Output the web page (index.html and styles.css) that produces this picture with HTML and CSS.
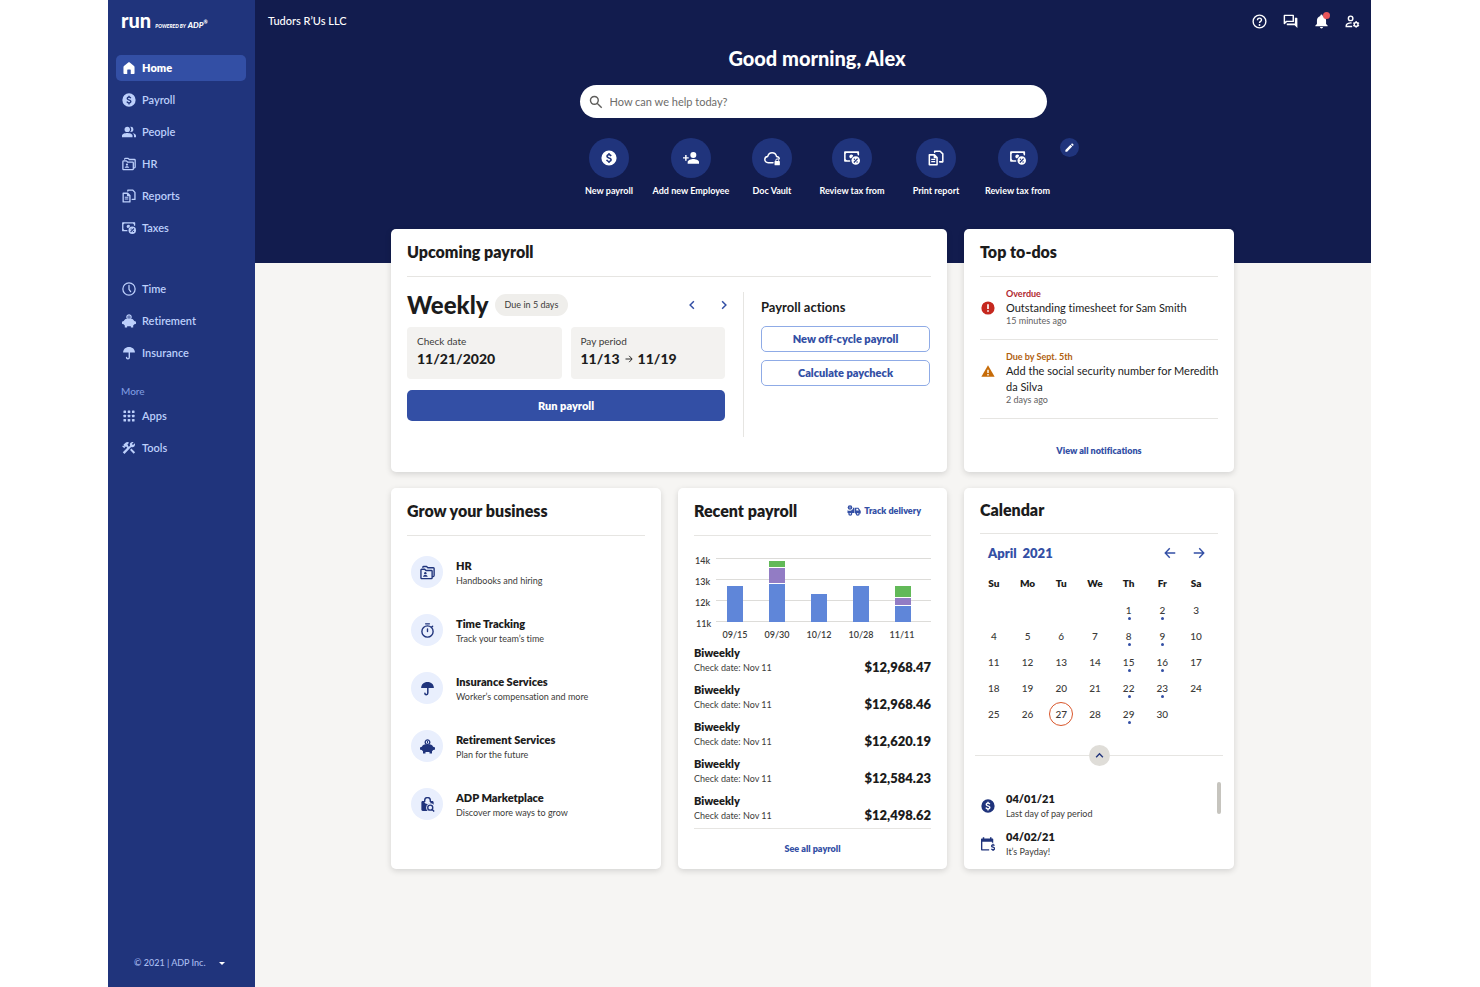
FILE: index.html
```html
<!DOCTYPE html>
<html lang="en">
<head>
<meta charset="utf-8">
<meta name="viewport" content="width=device-width, initial-scale=1">
<title>RUN – Home</title>
<link rel="stylesheet" href="styles.css">
</head>
<body>
<svg class="sprite" aria-hidden="true">
  <symbol id="i-home" viewBox="0 0 24 24"><path fill="currentColor" d="M2.5 10.6c0-.8.3-1.4.9-1.9l7.3-6.2c.8-.6 1.8-.6 2.6 0l7.3 6.2c.6.5.9 1.1.9 1.9V21c0 .8-.5 1.3-1.300 1.300H15V15.500c0-.6-.4-1-1-1h-4c-.6 0-1 .4-1 1v6.800H3.800c-.8 0-1.300-.5-1.300-1.300z"/></symbol>
  <symbol id="i-dollar" viewBox="0 0 24 24"><path fill="currentColor" fill-rule="evenodd" d="M12 .6a11.400 11.400 0 1 0 0 22.800 11.400 11.400 0 0 0 0-22.800zm1.100 17.300V19.500h-2.200v-1.500c-1.600-.3-2.900-1.200-3.400-3l2.200-.9c.4 1.300 1.200 1.900 2.400 1.900 1.100 0 1.800-.5 1.800-1.300 0-.9-.8-1.200-2.300-1.700-1.800-.6-3.700-1.300-3.700-3.500 0-1.800 1.200-3 3-3.400V4.600h2.200v1.500c1.500.3 2.500 1.200 3 2.600l-2.100.9c-.3-.9-1-1.400-2-1.400s-1.700.4-1.700 1.200c0 .8.8 1.100 2.500 1.700 1.900.7 3.500 1.400 3.500 3.600 0 1.800-1.200 2.900-3.200 3.200z"/></symbol>
  <symbol id="i-people" viewBox="0 0 24 24"><g fill="currentColor"><circle cx="9" cy="7.500" r="4.600"/><path d="M9 13.600c-3 0-9 1.300-9 4.300V21h18v-3.100c0-3-6-4.300-9-4.300zM15 12.100a4.600 4.600 0 1 0-1-9.100 7 7 0 0 1 0 9zM18.200 14c1.500 1 2.400 2.200 2.400 4v3H24v-3.100c0-2.100-2.900-3.400-5.800-3.900z"/></g></symbol>
  <symbol id="i-hr" viewBox="0 0 24 24"><path fill="none" stroke="currentColor" stroke-width="2.200" stroke-linejoin="round" stroke-linecap="round" d="M1.500 20.500V8c0-.8.500-1.300 1.300-1.300h4.700l2 2h8.700c.7 0 1.200.5 1.200 1.200v10.600c0 .8-.5 1.300-1.200 1.300H2.800c-.8 0-1.300-.5-1.300-1.300zM4.500 3.600C4.700 2.700 5.200 2.300 6 2.300h4.500l2 2h8.800c.8 0 1.300.5 1.300 1.300v10.900c0 1.200-.4 1.800-1.300 2"/><circle cx="8.500" cy="13" r="1.900" fill="currentColor"/><path fill="currentColor" d="M4.800 18.600c0-1.700 1.600-2.600 3.700-2.600s3.700.9 3.700 2.600z"/></symbol>
  <symbol id="i-reports" viewBox="0 0 24 24"><path fill="none" stroke="currentColor" stroke-width="2.300" stroke-linejoin="round" stroke-linecap="round" d="M2 7.300h7.600l4 4V22.200H2zM9.600 7.300v4h4M10 3.500V1.800h8.200l4 4v12h-4.700"/><path stroke="currentColor" stroke-width="1.800" d="M4.800 14h6M4.800 17.300h6"/></symbol>
  <symbol id="i-taxes" viewBox="0 0 24 24"><path fill="none" stroke="currentColor" stroke-width="2.300" stroke-linejoin="round" stroke-linecap="round" d="M8.500 16.500H1.300V3.200h20.200v4"/><path fill="currentColor" d="M1 3h3.500C4 4.500 3 5.700 1 6zM1 13.500c2 .3 3 1.500 3.500 3H1zM22 3h-3.500c.5 1.500 1.500 2.700 3.500 3z"/><circle cx="11" cy="9.600" r="3" fill="currentColor"/><circle class="ring" cx="17.600" cy="15.800" r="7.600"/><circle cx="17.600" cy="15.800" r="6.400" fill="currentColor"/><g class="cut"><path d="m14.800 18.700 5.600-5.800"/><circle cx="15.600" cy="13.800" r="1.100"/><circle cx="19.600" cy="17.900" r="1.100"/></g></symbol>
  <symbol id="i-clock" viewBox="0 0 24 24"><path fill="none" stroke="currentColor" stroke-width="2.200" stroke-linecap="round" d="M12 1.500a10.500 10.500 0 1 0 0 21 10.500 10.500 0 0 0 0-21zM12 6v6.500l2.800 4"/></symbol>
  <symbol id="i-piggy" viewBox="0 0 24 24"><g fill="currentColor"><path d="M3 12.200c1.200-2.900 3.800-4.300 9-4.300s7.800 1.400 9 4.300l2.400.8c.4.100.6.400.6.800v2.400c0 .4-.2.700-.6.800l-2.200.7-2 2V23h-4v-2.200H8.800V23h-4v-3.300l-2-2L.6 17c-.4-.1-.6-.4-.6-.8v-2.400c0-.4.200-.7.600-.8z"/><path fill-rule="evenodd" d="M12 .4a4.800 4.800 0 0 0-3.700 7.800h7.400A4.800 4.800 0 0 0 12 .4zm0 2a2.600 2.600 0 1 1 0 5.200 2.600 2.600 0 0 1 0-5.200z"/><rect x="11.200" y="3.200" width="1.600" height="3.500"/></g></symbol>
  <symbol id="i-umbrella" viewBox="0 0 24 24"><path fill="currentColor" d="M12 1.500c-6 0-10.200 4-10.200 9.800h20.400C22.200 5.500 18 1.500 12 1.500z"/><path fill="none" stroke="currentColor" stroke-width="2.400" stroke-linecap="round" d="M12.500 10.500v8.800c0 1.700-1 2.700-2.400 2.700s-2.300-.9-2.300-2.300"/></symbol>
  <symbol id="i-apps" viewBox="0 0 24 24"><g fill="currentColor"><rect x="2.500" y="2.500" width="4.400" height="4.400" rx="1"/><rect x="9.800" y="2.500" width="4.400" height="4.400" rx="1"/><rect x="17.100" y="2.500" width="4.400" height="4.400" rx="1"/><rect x="2.500" y="9.800" width="4.400" height="4.400" rx="1"/><rect x="9.800" y="9.800" width="4.400" height="4.400" rx="1"/><rect x="17.100" y="9.800" width="4.400" height="4.400" rx="1"/><rect x="2.500" y="17.100" width="4.400" height="4.400" rx="1"/><rect x="9.800" y="17.100" width="4.400" height="4.400" rx="1"/><rect x="17.100" y="17.100" width="4.400" height="4.400" rx="1"/></g></symbol>
  <symbol id="i-tools" viewBox="0 0 24 24"><path fill="currentColor" d="m13.800 15.300 2.200-2.300 6.500 6.300-2.500 2.600zM17.500 10.500c2.900 0 4.800-2.100 4.800-4.600 0-.7-.1-1.300-.4-1.900l-3 3-2-2 3-3c-.6-.3-1.200-.4-1.900-.4-2.500 0-4.600 1.900-4.600 4.600 0 .7.100 1.200.4 1.800l-2 2-1.900-1.900.8-.8-1.500-1.500 3-3c-1.700-1.700-4.400-1.700-6.100 0L2.400 6.500l1.500 1.500H1l-.8.800L4 12.500l.8-.8V8.900l1.500 1.500.8-.8L9 11.500l-7.700 7.700 2.900 2.900L15.700 10.100c.6.300 1.100.4 1.800.4z"/></symbol>
  <symbol id="i-help" viewBox="0 0 24 24"><path fill="none" stroke="currentColor" stroke-width="2.200" d="M12 1.800a10.200 10.200 0 1 0 0 20.400 10.200 10.200 0 0 0 0-20.400zM8.800 9.800c0-1.800 1.300-3.200 3.200-3.200s3.200 1.300 3.200 2.900c0 2.200-3.200 2.500-3.200 5"/><circle cx="12" cy="17.500" r="1.500" fill="currentColor"/></symbol>
  <symbol id="i-chat" viewBox="0 0 24 24"><path fill="none" stroke="currentColor" stroke-width="2.300" stroke-linejoin="round" d="M2.200 2.200h14.200v9.600H5.700l-3.500 3.500z"/><path fill="currentColor" d="M19 6h3c.6 0 1 .4 1 1v15.500L18.600 18H7c-.6 0-1-.4-1-1v-2h13z"/></symbol>
  <symbol id="i-bell" viewBox="0 0 24 24"><path fill="currentColor" d="M12 23c1.300 0 2.400-1 2.400-2.300H9.600C9.600 22 10.700 23 12 23zm7.300-7V10.500c0-3.700-2-6.500-5.500-7.400V2.400a1.800 1.800 0 0 0-3.600 0v.7c-3.500.9-5.500 3.700-5.500 7.400V16l-2.500 2.300v1.200h19.600v-1.200z"/></symbol>
  <symbol id="i-user-gear" viewBox="0 0 24 24"><g fill="none" stroke="currentColor"><circle cx="9" cy="7" r="3.600" stroke-width="2.300"/><path stroke-width="2.300" d="M10.500 14.300c-4.500-.4-8.500 1.600-8.500 4v1.600h9.500"/><circle cx="17.800" cy="16.600" r="3" stroke-width="2.200"/><path stroke-width="2" d="M17.800 11.200v2.400M17.800 19.600V22M13.100 13.900l2.100 1.200M20.400 18.100l2.100 1.200M13.100 19.300l2.100-1.200M20.400 15.100l2.100-1.200"/></g></symbol>
  <symbol id="i-search" viewBox="0 0 24 24"><path fill="none" stroke="currentColor" stroke-width="2.400" d="M9.200 2.500a6.700 6.700 0 1 0 0 13.400 6.700 6.700 0 0 0 0-13.400zM14 14l7.800 7.800"/></symbol>
  <symbol id="i-add-user" viewBox="0 0 24 24"><g fill="currentColor"><circle cx="15.500" cy="7.500" r="4.500"/><path d="M15.500 13.500c-3 0-8.500 1.500-8.500 4.500v2.500h17V18c0-3-5.500-4.500-8.500-4.500z"/><path d="M3.200 7.500h2.200v3.200h3.200v2.200H5.400V16H3.200v-3.100H0v-2.200h3.200z"/></g></symbol>
  <symbol id="i-cloud" viewBox="0 0 24 24"><path fill="none" stroke="currentColor" stroke-width="2.200" stroke-linecap="round" d="M13.500 19H6.200C3.300 19 1.200 17 1.200 14.300c0-2.600 2-4.500 4.300-4.700C6.400 6.300 8.900 4 12.100 4c3.600 0 6 2.400 6.700 5.600 2.300.2 3.900 1.600 4 3.600"/><rect x="15.800" y="16.500" width="8" height="6.500" rx="1" fill="currentColor"/><path fill="none" stroke="currentColor" stroke-width="1.500" d="M17.700 17v-1.500a2.100 2.100 0 0 1 4.200 0V17"/></symbol>
  <symbol id="i-pencil" viewBox="0 0 24 24"><path fill="currentColor" d="M3 17.300V21h3.800L17.900 9.900l-3.800-3.800zM20.700 7c.4-.4.400-1 0-1.400l-2.300-2.300c-.4-.4-1-.4-1.400 0l-1.800 1.800 3.700 3.800z"/></symbol>
  <symbol id="i-left" viewBox="0 0 24 24"><path fill="none" stroke="currentColor" stroke-width="3.600" d="M16.500 3 7.500 12l9 9"/></symbol>
  <symbol id="i-right" viewBox="0 0 24 24"><path fill="none" stroke="currentColor" stroke-width="3.600" d="m7.500 3 9 9-9 9"/></symbol>
  <symbol id="i-up" viewBox="0 0 24 24"><path fill="none" stroke="currentColor" stroke-width="3.600" d="m3 16.500 9-9 9 9"/></symbol>
  <symbol id="i-arrow-left" viewBox="0 0 24 24"><path fill="none" stroke="currentColor" stroke-width="2.800" d="M22.500 12H3M11.500 2.500 2.500 12l9 9.500"/></symbol>
  <symbol id="i-arrow-right" viewBox="0 0 24 24"><path fill="none" stroke="currentColor" stroke-width="2.800" d="M1.500 12H21M12.500 2.500l9 9.500-9 9.500"/></symbol>
  <symbol id="i-error" viewBox="0 0 24 24"><circle cx="12" cy="12" r="11.300" fill="currentColor"/><path fill="#fff" d="M10.600 5.500h2.800v8h-2.800zM10.600 15.800h2.800v2.800h-2.800z"/></symbol>
  <symbol id="i-warning" viewBox="0 0 24 24"><path fill="currentColor" d="M.6 22 12 2l11.400 20z"/><path fill="#fff" d="M10.800 9.800h2.400v5.700h-2.400zM10.800 17.200h2.400v2.400h-2.400z"/></symbol>
  <symbol id="i-timer" viewBox="0 0 24 24"><path fill="none" stroke="currentColor" stroke-width="2.200" stroke-linecap="round" d="M12 4.600a9 9 0 1 0 0 18 9 9 0 0 0 0-18zM9 1.300h6M12 9.500v4M18.700 6.600l1.500-1.400"/></symbol>
  <symbol id="i-market" viewBox="0 0 24 24"><path fill="none" stroke="currentColor" stroke-width="2.200" d="M7.500 8V5.500a4.500 4.500 0 0 1 9 0V8"/><path fill="currentColor" d="M2.200 8.500c0-1.400.8-2.300 2.200-2.300h2.200c.4 2.700 2 4.800 5.400 4.800s5-2.100 5.400-4.800h2.200c1.400 0 2.200.9 2.200 2.300v3.700a6.900 6.900 0 0 0-12 4.600c0 2.200.9 4.300 2.500 5.500H4.400c-1.400 0-2.200-.8-2.200-2.200z"/><path fill="none" stroke="currentColor" stroke-width="2.200" d="M16.400 13a4 4 0 1 0 0 8 4 4 0 0 0 0-8zM19.300 19.800l3.400 3.500"/></symbol>
  <symbol id="i-truck" viewBox="0 0 28 22"><g fill="currentColor"><circle cx="6" cy="5" r="4.600"/><path d="M1 10.500c3 2 7.500 1.500 10-1.500.8-1 1.200-2.300 1.200-3.500H15V16H1zM16 5.500h5.800c.7 0 1.300.3 1.700.9l3.300 4.600c.5.700.7 1.100.7 1.800V17H16z"/><circle cx="6.500" cy="17.500" r="4"/><circle cx="21.500" cy="17.500" r="4"/></g><g fill="#fff"><circle cx="6.500" cy="17.500" r="1.500"/><circle cx="21.500" cy="17.500" r="1.500"/><path d="M18.500 7.500h3l2.300 3.500h-5.300zM5.300 3h1.400v4H5.300z"/></g></symbol>
  <symbol id="i-payday" viewBox="0 0 24 24"><path fill="currentColor" d="M0 4.200c0-1 .7-1.700 1.700-1.700H3V.3h2.600v2.200h9.800V.3H18v2.200h1.300c1 0 1.700.7 1.700 1.700V10h-2.300V8H2.300v13H14v2.300H1.700C.7 23.300 0 22.600 0 21.600z"/><path fill="none" stroke="currentColor" stroke-width="2.300" d="M23 14.800c-.5-1-1.300-1.400-2.400-1.400-1.500 0-2.500.8-2.500 2 0 2.900 5.100 1.300 5.100 4.200 0 1.300-1 2.200-2.600 2.200-1.400 0-2.300-.6-2.700-1.700M20.600 11.500v2M20.600 21.500v2.300"/></symbol>
</svg>

<div class="app">
  <aside class="sidebar">
    <div class="brand"><span class="brand-run">run</span><span class="brand-by">POWERED BY</span><span class="brand-adp">ADP<sup>®</sup></span></div>
    <nav class="nav" aria-label="Main">
      <ul class="nav-list">
        <li><a class="nav-link is-active" href="#" aria-current="page"><svg class="icon"><use href="#i-home"/></svg>Home</a></li>
        <li><a class="nav-link" href="#"><svg class="icon"><use href="#i-dollar"/></svg>Payroll</a></li>
        <li><a class="nav-link" href="#"><svg class="icon"><use href="#i-people"/></svg>People</a></li>
        <li><a class="nav-link" href="#"><svg class="icon"><use href="#i-hr"/></svg>HR</a></li>
        <li><a class="nav-link" href="#"><svg class="icon"><use href="#i-reports"/></svg>Reports</a></li>
        <li><a class="nav-link" href="#"><svg class="icon"><use href="#i-taxes"/></svg>Taxes</a></li>
      </ul>
      <ul class="nav-list">
        <li><a class="nav-link" href="#"><svg class="icon"><use href="#i-clock"/></svg>Time</a></li>
        <li><a class="nav-link" href="#"><svg class="icon"><use href="#i-piggy"/></svg>Retirement</a></li>
        <li><a class="nav-link" href="#"><svg class="icon"><use href="#i-umbrella"/></svg>Insurance</a></li>
      </ul>
      <h2 class="nav-heading">More</h2>
      <ul class="nav-list">
        <li><a class="nav-link" href="#"><svg class="icon"><use href="#i-apps"/></svg>Apps</a></li>
        <li><a class="nav-link" href="#"><svg class="icon"><use href="#i-tools"/></svg>Tools</a></li>
      </ul>
    </nav>
    <button class="legal" type="button">© 2021 | ADP Inc.<span class="caret"></span></button>
  </aside>

  <main class="main">
    <header class="hero">
      <div class="topbar">
        <span>Tudors R’Us LLC</span>
        <div class="tools">
          <button type="button" aria-label="Help"><svg class="icon"><use href="#i-help"/></svg></button>
          <button type="button" aria-label="Messages"><svg class="icon"><use href="#i-chat"/></svg></button>
          <button type="button" aria-label="Notifications"><svg class="icon"><use href="#i-bell"/></svg><span class="badge"></span></button>
          <button type="button" aria-label="Account settings"><svg class="icon"><use href="#i-user-gear"/></svg></button>
        </div>
      </div>
      <h1 class="greeting">Good morning, Alex</h1>
      <label class="search"><svg class="icon"><use href="#i-search"/></svg><input type="search" placeholder="How can we help today?" aria-label="Search"></label>
      <div class="shortcuts">
        <div class="shortcut-list">
          <a class="shortcut" href="#"><span class="disc"><svg class="icon"><use href="#i-dollar"/></svg></span>New payroll</a>
          <a class="shortcut" href="#"><span class="disc"><svg class="icon"><use href="#i-add-user"/></svg></span>Add new Employee</a>
          <a class="shortcut" href="#"><span class="disc"><svg class="icon"><use href="#i-cloud"/></svg></span>Doc Vault</a>
          <a class="shortcut" href="#"><span class="disc"><svg class="icon"><use href="#i-taxes"/></svg></span>Review tax from</a>
          <a class="shortcut" href="#"><span class="disc"><svg class="icon"><use href="#i-reports"/></svg></span>Print report</a>
          <a class="shortcut" href="#"><span class="disc"><svg class="icon"><use href="#i-taxes"/></svg></span>Review tax from</a>
        </div>
        <button class="edit" type="button" aria-label="Edit shortcuts"><svg class="icon"><use href="#i-pencil"/></svg></button>
      </div>
    </header>

    <div class="cards">
      <section class="card card-wide">
        <header class="card-head"><h2>Upcoming payroll</h2></header>
        <div class="upcoming">
          <div class="run">
            <div class="run-head">
              <h3>Weekly</h3><span class="pill">Due in 5 days</span>
              <div class="pager">
                <button type="button" aria-label="Previous payroll"><svg class="icon"><use href="#i-left"/></svg></button>
                <button type="button" aria-label="Next payroll"><svg class="icon"><use href="#i-right"/></svg></button>
              </div>
            </div>
            <dl class="facts">
              <div class="fact"><dt>Check date</dt><dd>11/21/2020</dd></div>
              <div class="fact"><dt>Pay period</dt><dd>11/13 <svg class="icon"><use href="#i-arrow-right"/></svg> 11/19</dd></div>
            </dl>
            <button class="primary" type="button">Run payroll</button>
          </div>
          <div class="actions">
            <h3>Payroll actions</h3>
            <button class="outline" type="button">New off-cycle payroll</button>
            <button class="outline" type="button">Calculate paycheck</button>
          </div>
        </div>
      </section>

      <section class="card">
        <header class="card-head"><h2>Top to-dos</h2></header>
        <ul class="todos">
          <li class="todo todo-error"><svg class="icon"><use href="#i-error"/></svg><div><p class="todo-due">Overdue</p><p class="todo-text">Outstanding timesheet for Sam Smith</p><p class="todo-time">15 minutes ago</p></div></li>
          <li class="todo todo-warning"><svg class="icon"><use href="#i-warning"/></svg><div><p class="todo-due">Due by Sept. 5th</p><p class="todo-text">Add the social security number for Meredith da Silva</p><p class="todo-time">2 days ago</p></div></li>
        </ul>
        <p class="more more-todos"><a href="#">View all notifications</a></p>
      </section>

      <section class="card">
        <header class="card-head"><h2>Grow your business</h2></header>
        <ul class="grow">
          <li><span class="tint"><svg class="icon"><use href="#i-hr"/></svg></span><div><h3>HR</h3><p>Handbooks and hiring</p></div></li>
          <li><span class="tint"><svg class="icon"><use href="#i-timer"/></svg></span><div><h3>Time Tracking</h3><p>Track your team’s time</p></div></li>
          <li><span class="tint"><svg class="icon"><use href="#i-umbrella"/></svg></span><div><h3>Insurance Services</h3><p>Worker’s compensation and more</p></div></li>
          <li><span class="tint"><svg class="icon"><use href="#i-piggy"/></svg></span><div><h3>Retirement Services</h3><p>Plan for the future</p></div></li>
          <li><span class="tint"><svg class="icon"><use href="#i-market"/></svg></span><div><h3>ADP Marketplace</h3><p>Discover more ways to grow</p></div></li>
        </ul>
      </section>

      <section class="card">
        <header class="card-head"><h2>Recent payroll</h2><a class="track" href="#"><svg><use href="#i-truck"/></svg>Track delivery</a></header>
        <svg class="chart" viewBox="0 0 237 92" role="img" aria-label="Payroll totals by check date">
          <path class="chart-grid" d="M22 8.500h215M22 29.500h215M22 50.500h215M22 71.500h215"/>
          <g class="chart-label"><text x="1" y="14">14k</text><text x="1" y="35">13k</text><text x="1" y="56">12k</text><text x="2" y="77">11k</text></g>
          <g class="chart-blue"><rect x="33" y="36" width="16" height="36"/><rect x="75" y="34" width="16" height="38"/><rect x="117" y="44" width="16" height="28"/><rect x="159" y="36" width="16" height="36"/><rect x="201" y="56" width="16" height="16"/></g>
          <g class="chart-purple"><rect x="75" y="18" width="16" height="15"/><rect x="201" y="48" width="16" height="7"/></g>
          <g class="chart-green"><rect x="75" y="11" width="16" height="6"/><rect x="201" y="36" width="16" height="11"/></g>
          <g class="chart-label chart-dates"><text x="41" y="88">09/15</text><text x="83" y="88">09/30</text><text x="125" y="88">10/12</text><text x="167" y="88">10/28</text><text x="208" y="88">11/11</text></g>
        </svg>
        <ul class="payrolls">
          <li><div><h3>Biweekly</h3><p>Check date: Nov 11</p></div><strong>$12,968.47</strong></li>
          <li><div><h3>Biweekly</h3><p>Check date: Nov 11</p></div><strong>$12,968.46</strong></li>
          <li><div><h3>Biweekly</h3><p>Check date: Nov 11</p></div><strong>$12,620.19</strong></li>
          <li><div><h3>Biweekly</h3><p>Check date: Nov 11</p></div><strong>$12,584.23</strong></li>
          <li><div><h3>Biweekly</h3><p>Check date: Nov 11</p></div><strong>$12,498.62</strong></li>
        </ul>
        <p class="more more-payroll"><a href="#">See all payroll</a></p>
      </section>

      <section class="card card-calendar">
        <header class="card-head"><h2>Calendar</h2></header>
        <div class="month">
          <h3>April&nbsp; 2021</h3>
          <button type="button" aria-label="Previous month"><svg class="icon"><use href="#i-arrow-left"/></svg></button>
          <button type="button" aria-label="Next month"><svg class="icon"><use href="#i-arrow-right"/></svg></button>
        </div>
        <table class="days">
          <thead><tr><th>Su</th><th>Mo</th><th>Tu</th><th>We</th><th>Th</th><th>Fr</th><th>Sa</th></tr></thead>
          <tbody>
            <tr><td></td><td></td><td></td><td></td><td><span class="dot">1</span></td><td><span class="dot">2</span></td><td>3</td></tr>
            <tr><td>4</td><td>5</td><td>6</td><td>7</td><td><span class="dot">8</span></td><td><span class="dot">9</span></td><td>10</td></tr>
            <tr><td>11</td><td>12</td><td>13</td><td>14</td><td><span class="dot">15</span></td><td><span class="dot">16</span></td><td>17</td></tr>
            <tr><td>18</td><td>19</td><td>20</td><td>21</td><td><span class="dot">22</span></td><td><span class="dot">23</span></td><td>24</td></tr>
            <tr><td>25</td><td>26</td><td><span class="today">27</span></td><td>28</td><td><span class="dot">29</span></td><td>30</td><td></td></tr>
          </tbody>
        </table>
        <div class="fold"><button type="button" aria-label="Collapse calendar"><svg class="icon"><use href="#i-up"/></svg></button></div>
        <ul class="events">
          <li><svg class="icon"><use href="#i-dollar"/></svg><div><h3>04/01/21</h3><p>Last day of pay period</p></div></li>
          <li><svg class="icon"><use href="#i-payday"/></svg><div><h3>04/02/21</h3><p>It’s Payday!</p></div></li>
        </ul>
        <span class="scroll-thumb"></span>
      </section>
    </div>
  </main>
</div>
</body>
</html>
```

FILE: styles.css
```css
:root {
  --navy: #121c4e;
  --blue: #20347c;
  --accent: #334fa5;
  --ink: #1c1c1c;
  --text: #3c3b39;
  --line: #e6e5e2;
  --soft: #f3f2f0;
}

* { box-sizing: border-box; }

body {
  margin: 0;
  padding: 0 109px 0 108px;
  background: #fff;
  color: var(--ink);
  font-family: Lato, "Open Sans", sans-serif;
  font-size: 11px;
  font-variant-ligatures: none;
  line-height: 16px;
}

h1, h2, h3, p, ul, dl, dd { margin: 0; padding: 0; }
ul { list-style: none; }
a { color: inherit; text-decoration: none; }
button { margin: 0; padding: 0; border: 0; background: none; color: inherit; font: inherit; cursor: pointer; }
.sprite { position: absolute; width: 0; height: 0; }
.icon { display: block; flex: none; width: 14px; height: 14px; }
.ring { fill: var(--blue); }
.cut { fill: var(--blue); }
.cut path { stroke: var(--blue); stroke-width: 2; }

.app { display: flex; min-height: 100vh; background: #f6f5f3; }

/* Sidebar */
.sidebar {
  display: flex;
  flex: none;
  flex-direction: column;
  width: 147px;
  padding: 8px 9px 16px 8px;
  background: var(--blue);
  color: #bccffb;
}
.brand { display: flex; align-items: baseline; height: 47px; padding-left: 5px; color: #fff; white-space: nowrap; }
.brand-run { font-size: 20px; font-weight: 900; line-height: 24px; }
.brand-by { margin-left: 4px; font-size: 5px; font-style: italic; font-weight: 900; }
.brand-adp { margin-left: 2px; font-size: 8px; font-style: italic; font-weight: 900; }
.brand-adp sup { font-size: 5px; line-height: 0; }
.nav { flex: 1; }
.nav-list { display: grid; gap: 6px; }
.nav-list + .nav-list { margin-top: 35px; }
.nav-link {
  display: flex;
  align-items: center;
  gap: 6px;
  height: 26px;
  padding: 0 6px;
  border-radius: 5px;
  font-weight: 600;
}
.nav-link.is-active { background: var(--accent); color: #fff; font-weight: 800; }
.nav-heading { margin: 17px 5px 4px; color: #7f9be0; font-size: 10px; font-weight: 500; }
.legal { display: flex; align-items: center; gap: 13px; padding-left: 18px; color: #a9bdf0; font-size: 9px; font-weight: 500; }
.caret { border: 3px solid transparent; border-top-color: #fff; border-bottom: 0; }

/* Hero */
.main { flex: 1; min-width: 0; }
.hero { height: 263px; background: var(--navy); color: #fff; }
.topbar { display: flex; align-items: center; justify-content: space-between; height: 42px; padding: 0 11px 0 13px; font-weight: 500; }
.tools { display: flex; gap: 16px; }
.tools button { position: relative; }
.tools .icon { width: 15px; height: 15px; }
.badge { position: absolute; top: -2px; right: -1px; width: 7px; height: 7px; border-radius: 50%; background: #e8555a; }
.greeting { padding: 3px 0 14px 8px; font-size: 20px; font-weight: 900; line-height: 26px; text-align: center; }
.search {
  display: flex;
  align-items: center;
  gap: 7px;
  width: 467px;
  max-width: 100%;
  height: 33px;
  margin: 0 auto;
  padding: 0 9px;
  border-radius: 17px;
  background: #fff;
  color: #5f5e5c;
}
.search input { flex: 1; padding: 0; border: 0; outline: 0; background: none; color: inherit; font: inherit; }
.search input::placeholder { color: #6d6c6a; opacity: 1; }
.shortcuts { display: flex; gap: 5px; justify-content: center; margin-top: 20px; padding-left: 21px; }
.shortcut-list { display: grid; grid-template-columns: 82px 82px 80px 80px 88px 75px; }
.shortcut { display: grid; gap: 5px; justify-items: center; font-size: 9px; font-weight: 700; white-space: nowrap; }
.disc { display: grid; place-items: center; width: 40px; height: 40px; border-radius: 50%; background: var(--blue); }
.disc .icon { width: 16px; height: 16px; }
.edit { display: grid; place-items: center; width: 19px; height: 19px; border-radius: 50%; background: var(--blue); }
.edit .icon { width: 11px; height: 11px; }

/* Cards */
.cards {
  display: grid;
  grid-template-columns: 270fr 269fr 270fr;
  gap: 16px 17px;
  margin-top: -34px;
  padding: 0 137px 40px 136px;
}
.card { position: relative; padding: 0 16px; border-radius: 5px; background: #fff; box-shadow: 0 2px 6px rgb(0 0 0 / 14%); }
.card-wide { grid-column: span 2; }
.card-head { display: flex; align-items: center; justify-content: space-between; height: 48px; padding-bottom: 2px; border-bottom: 1px solid var(--line); }
.card-head h2 { font-size: 16px; font-weight: 800; }

.upcoming { display: flex; padding: 15px 0 35px; }
.run { flex: 1; min-width: 0; padding: 0 18px 16px 0; border-right: 1px solid var(--line); }
.run-head { display: flex; align-items: center; gap: 6px; height: 25px; }
.run-head h3 { font-size: 24px; font-weight: 900; }
.pill { padding: 3px 10px; border-radius: 11px; background: #efeeeb; color: var(--text); font-size: 9px; }
.pager { display: flex; gap: 18px; margin: 0 -6px 0 auto; color: var(--accent); }
.pager .icon { width: 10px; height: 10px; }
.pager button { padding: 2px; }
.facts { display: grid; grid-template-columns: 1fr 1fr; gap: 9px; margin: 10px 0 11px; }
.fact { padding: 6px 10px 10px; border-radius: 4px; background: var(--soft); }
.fact dt { color: var(--text); font-size: 10px; }
.fact dd { display: flex; gap: 5px; align-items: center; font-size: 14px; font-weight: 900; line-height: 20px; }
.fact .icon { width: 8px; height: 8px; }
.primary { width: 100%; height: 31px; border-radius: 5px; background: var(--accent); color: #fff; font-weight: 800; }
.actions { display: grid; gap: 8px; align-content: start; width: 187px; padding: 7px 1px 0 17px; }
.actions h3 { margin-bottom: 3px; font-size: 13px; font-weight: 700; }
.outline { height: 26px; border: 1px solid #8fabe6; border-radius: 5px; color: var(--accent); font-weight: 800; }

.todo { display: flex; gap: 11px; padding: 11px 0 13px 1px; border-bottom: 1px solid var(--line); }
.todo .icon { margin-top: 13px; }
.todo-due { font-size: 9px; font-weight: 700; line-height: 12px; }
.todo-text { margin-right: -8px; font-weight: 400; }
.todo-time { color: #62615f; font-size: 9px; line-height: 10px; }
.todo-error .icon { color: #c5281f; }
.todo-error .todo-due { color: #b0272f; }
.todo-warning .icon { color: #c66b08; }
.todo-warning .todo-due { color: #b0600f; }
.more { color: var(--accent); font-size: 9px; font-weight: 800; text-align: center; }
.more-todos { padding: 24px 0 13px; }

.grow { padding: 7px 4px 0; }
.grow li { display: flex; gap: 13px; align-items: center; height: 58px; }
.grow li div { padding-top: 2px; }
.tint { display: grid; flex: none; place-items: center; width: 32px; height: 32px; border-radius: 50%; background: #e9effd; color: var(--blue); }
.tint .icon { width: 15px; height: 15px; }
.grow h3, .payrolls h3, .events h3 { font-size: 11px; font-weight: 800; line-height: 15px; }
.grow p, .payrolls p, .events p { color: var(--text); font-size: 9px; line-height: 15px; }

.track { display: flex; gap: 3px; align-items: center; padding-right: 10px; color: var(--accent); font-size: 9px; font-weight: 800; }
.track svg { width: 14px; height: 11px; }
.chart { display: block; width: 100%; margin-top: 14px; }
.chart-grid { stroke: #dddcd9; }
.chart-label { fill: var(--text); font-size: 9px; font-weight: 600; }
.chart-dates { text-anchor: middle; }
.chart-blue { fill: #5f86d9; }
.chart-purple { fill: #927cc4; }
.chart-green { fill: #62b958; }
.payrolls { display: grid; gap: 7px; margin-top: 3px; padding-bottom: 5px; border-bottom: 1px solid var(--line); }
.payrolls li { display: flex; align-items: flex-end; justify-content: space-between; }
.payrolls strong { font-size: 13px; font-weight: 800; line-height: 15px; }
.more-payroll { padding: 12px 0 11px; }

.card-calendar .card-head { height: 46px; }
.month { display: flex; gap: 17px; align-items: center; margin-top: 11px; padding: 0 13px 0 8px; color: var(--accent); }
.month h3 { flex: 1; font-size: 13px; font-weight: 800; }
.month .icon { width: 12px; height: 12px; }
.days { width: calc(100% - 2px); margin: 7px 0 0 -3px; border-collapse: collapse; table-layout: fixed; }
.days th, .days td { height: 26px; padding: 0; color: var(--text); font-size: 10px; font-weight: 500; text-align: center; }
.days th { height: 29px; color: var(--ink); font-weight: 800; }
.dot { position: relative; }
.dot::after { content: ""; position: absolute; bottom: -4px; left: 50%; width: 3px; height: 3px; margin-left: -1px; border-radius: 50%; background: var(--accent); }
.today { display: grid; place-items: center; width: 24px; height: 24px; margin: 0 auto; border: 1px solid #d9562b; border-radius: 50%; }
.fold { display: flex; align-items: center; margin: 18px -5px 0; }
.fold::before, .fold::after { content: ""; flex: 1; height: 1px; background: var(--line); }
.fold button { display: grid; place-items: center; width: 21px; height: 21px; border-radius: 50%; background: #dfddd8; color: var(--blue); }
.fold .icon { width: 9px; height: 9px; }
.events { display: grid; gap: 8px; padding: 25px 1px 10px; }
.events li { display: flex; gap: 11px; align-items: center; color: var(--blue); }
.events h3 { color: var(--ink); }
.scroll-thumb { position: absolute; right: 13px; bottom: 55px; width: 4px; height: 32px; border-radius: 2px; background: #c6c4be; }
```
